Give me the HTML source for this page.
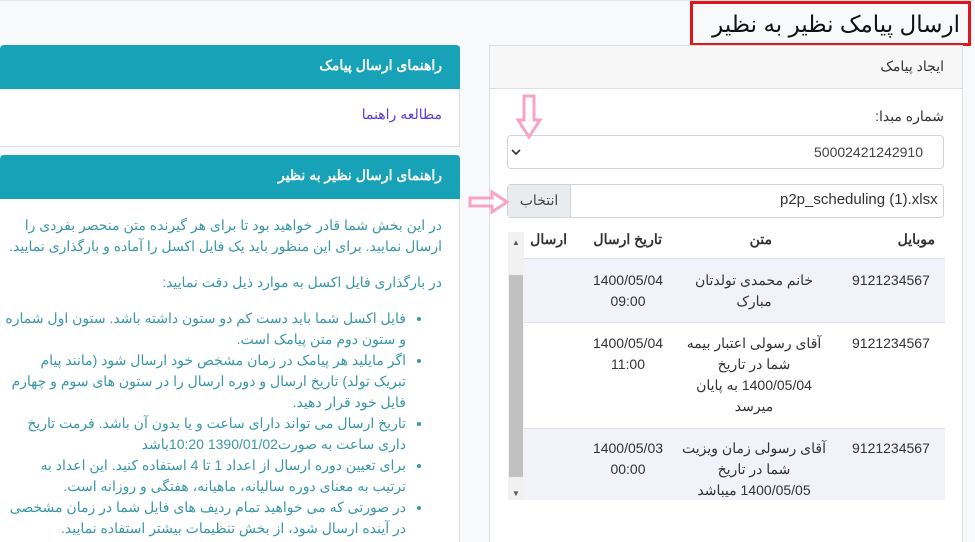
<!DOCTYPE html>
<html style="overflow:hidden;height:542px"><head><meta charset="utf-8"><style>
*{box-sizing:border-box;margin:0;padding:0}
body{width:975px;height:542px;overflow:hidden;background:#f8f9fa;font-family:"Liberation Sans","Noto Sans CJK SC",sans-serif;position:relative;color:#333}
.a{position:absolute}
.rtl{direction:rtl}
.teal{background:#17a2b8;color:#fff;font-weight:bold;font-size:14px;border-radius:4px 4px 0 0}
.card{background:#fff;border:1px solid #dfdfdf}
.p{color:#3b97a8;font-size:14px;line-height:21px;white-space:nowrap}
</style></head><body>
<div class="a" style="left:0;top:0;width:975px;height:1px;background:#e6e6e6"></div>
<div class="a rtl" style="left:690px;top:1px;width:281px;height:45px;border:3px solid #e2151e;background:#f8f9fa;font-size:23px;padding:7px 8px;color:#111;white-space:nowrap;overflow:hidden">ارسال پیامک نظیر به نظیر</div>

<div class="a card" style="left:-2px;top:45px;width:462px;height:102px;border-top:none"></div>
<div class="a teal rtl" style="left:0;top:45px;width:460px;height:44px;padding:12px 18px">راهنمای ارسال پیامک</div>
<div class="a rtl" style="left:0;top:106px;width:460px;padding:0 18px;font-size:14px;color:#5b3bd8">مطالعه راهنما</div>

<div class="a card" style="left:-2px;top:155px;width:462px;height:400px"></div>
<div class="a teal rtl" style="left:0;top:155px;width:460px;height:44px;padding:12px 18px">راهنمای ارسال نظیر به نظیر</div>
<div class="a rtl p" style="left:0;top:215px;width:460px;padding:0 18px 0 0">
<div>در این بخش شما قادر خواهید بود تا برای هر گیرنده متن منحصر بفردی را<br>ارسال نمایید. برای این منظور باید یک فایل اکسل را آماده و بارگذاری نمایید.</div>
<div style="margin-top:15px">در بارگذاری فایل اکسل به موارد ذیل دقت نمایید:</div>
<ul style="margin-top:15px;padding-right:36px">
<li>فایل اکسل شما باید دست کم دو ستون داشته باشد. ستون اول شماره<br>و ستون دوم متن پیامک است.</li>
<li>اگر مایلید هر پیامک در زمان مشخص خود ارسال شود (مانند پیام<br>تبریک تولد) تاریخ ارسال و دوره ارسال را در ستون های سوم و چهارم<br>فایل خود قرار دهید.</li>
<li>تاریخ ارسال می تواند دارای ساعت و یا بدون آن باشد. فرمت تاریخ<br>داری ساعت به صورت1390/01/02 10:20باشد</li>
<li>برای تعیین دوره ارسال از اعداد 1 تا 4 استفاده کنید. این اعداد به<br>ترتیب به معنای دوره سالیانه، ماهیانه، هفتگی و روزانه است.</li>
<li>در صورتی که می خواهید تمام ردیف های فایل شما در زمان مشخصی<br>در آینده ارسال شود، از بخش تنظیمات بیشتر استفاده نمایید.</li>
</ul></div>

<div class="a card" style="left:489px;top:45px;width:474px;height:510px"></div>
<div class="a rtl" style="left:490px;top:46px;width:472px;height:43px;background:#f7f7f7;border-bottom:1px solid #dfdfdf;font-size:14px;padding:12px 18px">ایجاد پیامک</div>
<div class="a rtl" style="left:490px;top:108px;width:454px;font-size:14px">شماره مبدا:</div>
<div class="a" style="left:507px;top:135px;width:437px;height:34px;border:1px solid #ced4da;border-radius:4px;background:#fff"></div>
<div class="a" style="left:814px;top:144px;font-size:14px;color:#444">50002421242910</div>
<svg class="a" style="left:510px;top:148px" width="12" height="8"><path d="M2 2l4 4 4-4" stroke="#333" stroke-width="1.6" fill="none"/></svg>
<div class="a" style="left:507px;top:184px;width:437px;height:34px;border:1px solid #ced4da;border-radius:4px;background:#fff"></div>
<div class="a" style="left:508px;top:185px;width:63px;height:32px;background:#e9ecef;border-right:1px solid #ced4da;font-size:14px;text-align:center;line-height:31px;color:#444" dir="rtl">انتخاب</div>
<div class="a" style="left:780px;top:191px;font-size:15px;color:#333">p2p_scheduling (1).xlsx</div>

<svg class="a" style="left:515px;top:94px" width="28" height="48"><path d="M9 2h10v24h6l-11 17l-11-17h6z" stroke="#f6a5c7" stroke-width="3" fill="none"/></svg>
<svg class="a" style="left:468px;top:189px" width="42" height="26"><path d="M2 9h22v-6l15 10l-15 10v-6h-22z" stroke="#f6a5c7" stroke-width="3" fill="none"/></svg>

<div class="a" style="left:508px;top:232px;width:16px;height:268px;background:#f1f1f1"></div>
<div class="a" style="left:509px;top:275px;width:14px;height:202px;background:#c1c1c1"></div>
<div class="a" style="left:512px;top:238px;font-size:8px;color:#555">▲</div>
<div class="a" style="left:512px;top:489px;font-size:8px;color:#555">▼</div>
<div class="a" style="left:524px;top:258px;width:421px;height:1px;background:#dee2e6"></div>
<div class="a" style="left:524px;top:259px;width:421px;height:64px;background:#f2f2fa;border-bottom:1px solid #dee2e6"></div>
<div class="a" style="left:524px;top:428px;width:421px;height:72px;background:#f2f2fa;border-top:1px solid #dee2e6"></div>
<div class="a rtl" style="left:524px;top:231px;width:421px;font-size:14px;font-weight:bold;color:#333">
<span class="a" style="right:10px">موبایل</span><span class="a" style="right:173px">متن</span><span class="a" style="right:283px">تاریخ ارسال</span><span class="a" style="right:378px">ارسال</span></div>
<div class="a" style="left:524px;top:270px;width:421px;font-size:14px;line-height:21px;color:#333">
<div class="a" style="left:328px;top:0">9121234567</div>
<div class="a rtl" style="left:160px;width:140px;text-align:center">خانم محمدی تولدتان مبارک</div>
<div class="a" style="left:56px;width:96px;text-align:center">1400/05/04<br>09:00</div>
</div>
<div class="a" style="left:524px;top:333px;width:421px;font-size:14px;line-height:21px;color:#333">
<div class="a" style="left:328px;top:0">9121234567</div>
<div class="a rtl" style="left:160px;width:140px;text-align:center">آقای رسولی اعتبار بیمه شما در تاریخ 1400/05/04 به پایان میرسد</div>
<div class="a" style="left:56px;width:96px;text-align:center">1400/05/04<br>11:00</div>
</div>
<div class="a" style="left:524px;top:438px;width:421px;height:62px;overflow:hidden;font-size:14px;line-height:21px;color:#333">
<div class="a" style="left:328px;top:0">9121234567</div>
<div class="a rtl" style="left:155px;width:150px;text-align:center">آقای رسولی زمان ویزیت<br>شما در تاریخ<br>1400/05/05 میباشد</div>
<div class="a" style="left:56px;width:96px;text-align:center">1400/05/03<br>00:00</div>
</div>
</body></html>
